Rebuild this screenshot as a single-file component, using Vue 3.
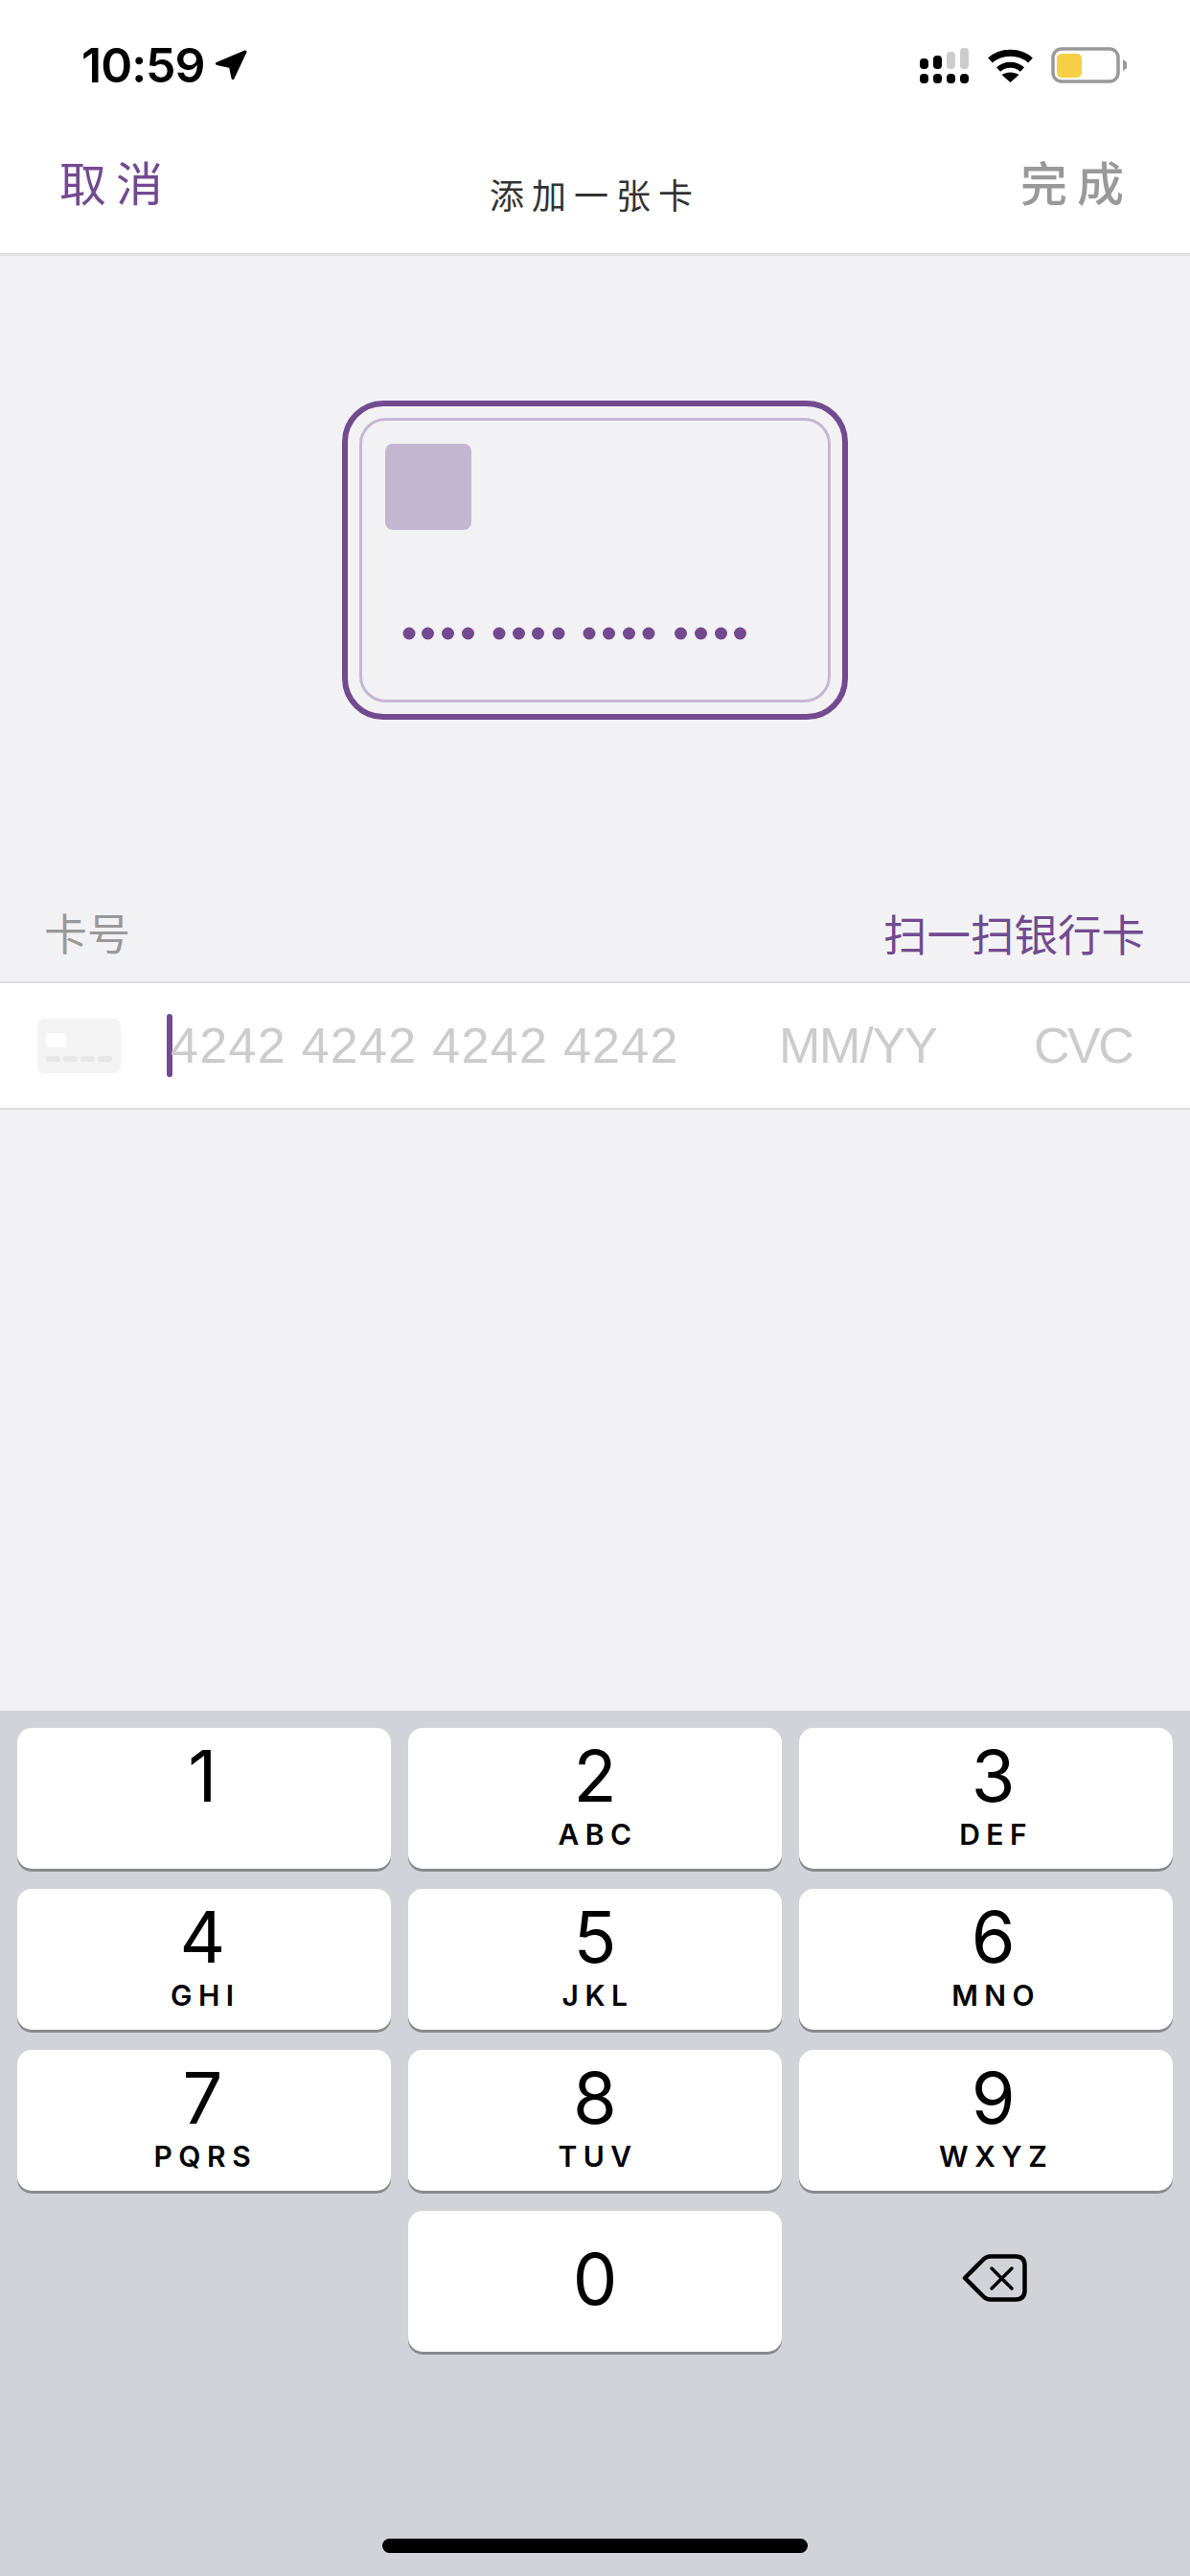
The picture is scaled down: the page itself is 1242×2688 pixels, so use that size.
<template>
  <div class="screen">
    <div class="status-bar">
      <div class="status-left">
        <span class="time">10:59</span>
        <svg class="arrow" width="34" height="32" viewBox="0 0 34 32">
          <path d="M32 2 L2.5 14.5 L16.5 17.5 L19 29.5 Z" fill="#000" stroke="#000" stroke-width="3" stroke-linejoin="round" />
        </svg>
      </div>
      <div class="status-right">
        <svg width="51" height="37" viewBox="0 0 51 37">
          <rect v-for="b in bars" :key="b.x" :x="b.x" :y="b.y" width="9" :height="22 - b.y" rx="4" :fill="b.fill" />
          <rect v-for="b in bars" :key="'d' + b.x" :x="b.x" y="27" width="9" height="10" rx="4" fill="#000" />
        </svg>
        <svg class="wifi" width="49" height="36" viewBox="0 0 49 36">
          <path d="M3.5 13 C14.5 2.5 34.5 2.5 45.5 13" fill="none" stroke="#000" stroke-width="7" />
          <path d="M12 22.5 C19 16 30 16 37 22.5" fill="none" stroke="#000" stroke-width="6" />
          <path d="M24.5 36 L15.5 28 C20.5 24.5 28.5 24.5 33.5 28 Z" fill="#000" />
        </svg>
        <svg class="battery" width="80" height="38" viewBox="0 0 80 38">
          <rect x="2" y="2" width="68" height="34" rx="9" fill="none" stroke="#999" stroke-width="3.5" />
          <rect x="6" y="7" width="26" height="25" rx="5" fill="#f7cf47" />
          <path d="M75 13 L79 16 L79 22 L75 25 Z" fill="#999" />
        </svg>
      </div>
    </div>

    <div class="nav">
      <span class="nav-side cancel">取消</span>
      <span class="nav-title">添加一张卡</span>
      <span class="nav-side done">完成</span>
    </div>

    <div class="card-area">
      <svg width="528" height="333" viewBox="0 0 528 333">
        <rect x="3" y="3" width="522" height="327" rx="40" fill="none" stroke="#734a90" stroke-width="6" />
        <rect x="19.5" y="19.5" width="489" height="294" rx="26" fill="none" stroke="#c5b7d3" stroke-width="3" />
        <rect x="45" y="45" width="90" height="90" rx="8" fill="#c3b6d0" />
        <circle v-for="x in dots" :key="x" :cx="x" cy="243" r="6.5" fill="#734a90" />
      </svg>
    </div>

    <div class="label-row">
      <span class="label">卡号</span>
      <span class="scan">扫一扫银行卡</span>
    </div>

    <div class="field">
      <svg class="field-icon" width="87" height="57" viewBox="0 0 87 57">
        <rect width="87" height="57" rx="7" fill="#f3f3f3" />
        <rect x="9" y="15" width="21" height="15" rx="2" fill="#fff" />
        <rect v-for="x in [9, 27, 45, 63]" :key="x" :x="x" y="39" width="15" height="6" rx="3" fill="#e7e7e7" />
      </svg>
      <span class="caret"></span>
      <span class="ph ph-number">4242 4242 4242 4242</span>
      <span class="ph ph-date">MM/YY</span>
      <span class="ph ph-cvc">CVC</span>
    </div>

    <div class="spacer"></div>

    <div class="keyboard">
      <div class="keys">
        <div v-for="k in keys" :key="k.n" class="key">
          <span class="digit">{{ k.n }}</span>
          <span class="letters">{{ k.l }}</span>
        </div>
        <div class="key-blank"></div>
        <div class="key key-zero"><span class="digit">0</span></div>
        <div class="key-blank backspace">
          <svg width="68" height="50" viewBox="0 0 68 50">
            <path d="M3 25 L21.5 6.5 Q25 2.5 30 2.5 L56 2.5 Q65.5 2.5 65.5 12 L65.5 38 Q65.5 47.5 56 47.5 L30 47.5 Q25 47.5 21.5 43.5 Z" fill="none" stroke="#000" stroke-width="4.5" stroke-linejoin="round" />
            <path d="M31 15 L52 36 M52 15 L31 36" fill="none" stroke="#000" stroke-width="3.5" stroke-linecap="round" />
          </svg>
        </div>
      </div>
      <div class="home-indicator"></div>
    </div>
  </div>
</template>

<script setup>
const bars = [
  { x: 0, y: 11, fill: '#000' },
  { x: 14, y: 8, fill: '#000' },
  { x: 28, y: 4, fill: '#ccc' },
  { x: 42, y: 0, fill: '#ccc' }
]

const dots = [
  70, 89.5, 110.5, 131.5,
  164, 184.5, 204.5, 226,
  258, 278.5, 299.5, 320,
  353.5, 374.5, 395.5, 415.5
]

const keys = [
  { n: '1', l: '' },
  { n: '2', l: 'ABC' },
  { n: '3', l: 'DEF' },
  { n: '4', l: 'GHI' },
  { n: '5', l: 'JKL' },
  { n: '6', l: 'MNO' },
  { n: '7', l: 'PQRS' },
  { n: '8', l: 'TUV' },
  { n: '9', l: 'WXYZ' }
]
</script>

<style>
html,
body {
  margin: 0;
  background: #f2f2f4;
}
</style>

<style scoped>
.screen {
  width: 1242px;
  height: 2688px;
  display: flex;
  flex-direction: column;
  background: #f2f2f4;
  font-family: Inter, "Noto Sans CJK SC", sans-serif;
  overflow: hidden;
}

.status-bar {
  height: 136px;
  background: #fff;
  display: flex;
  justify-content: space-between;
  align-items: center;
  padding: 0 65px 0 85px;
  box-sizing: border-box;
}

.status-left {
  display: flex;
  align-items: center;
  gap: 10px;
}

.time {
  font-size: 50px;
  line-height: 60px;
  font-weight: 600;
  letter-spacing: -1px;
  color: #000;
}

.status-right {
  display: flex;
  align-items: center;
}

.status-right svg {
  display: block;
}

.wifi {
  margin-left: 19px;
}

.battery {
  margin-left: 18px;
}

.nav {
  height: 131px;
  box-sizing: border-box;
  background: #fff;
  border-bottom: 3px solid #e0e0e2;
  display: grid;
  grid-template-columns: 1fr auto 1fr;
  padding: 0 62px;
  font-family: "Noto Sans CJK SC", sans-serif;
}

.nav-side {
  font-size: 49px;
  line-height: 56px;
  letter-spacing: 10px;
  padding-top: 25px;
}

.cancel {
  color: #734a90;
}

.done {
  color: #999;
  text-align: right;
  font-weight: 500;
  margin-right: -3px;
}

.nav-title {
  font-size: 36px;
  line-height: 44px;
  letter-spacing: 8px;
  color: #333;
  padding-top: 44px;
}

.card-area {
  display: flex;
  justify-content: center;
  padding-top: 151px;
}

.card-area svg {
  display: block;
}

.label-row {
  height: 273px;
  box-sizing: border-box;
  display: flex;
  justify-content: space-between;
  align-items: flex-end;
  padding: 0 47px 23px 46px;
  font-family: "Noto Sans CJK SC", sans-serif;
}

.label {
  font-size: 45px;
  line-height: 56px;
  color: #999;
}

.scan {
  font-size: 45.5px;
  line-height: 56px;
  color: #734a90;
}

.field {
  height: 134px;
  box-sizing: border-box;
  background: #fff;
  border-top: 2px solid #dfdfe1;
  border-bottom: 2px solid #dfdfe1;
  display: flex;
  align-items: center;
  padding-left: 39px;
}

.field-icon {
  display: block;
  flex-shrink: 0;
  margin-right: 48px;
}

.caret {
  width: 6px;
  height: 66px;
  border-radius: 3px;
  background: #734a90;
  flex-shrink: 0;
}

.ph {
  font-family: "Liberation Sans", sans-serif;
  font-size: 52px;
  line-height: 60px;
  color: #ccc;
}

.ph-number {
  width: 633px;
  letter-spacing: 1.3px;
  margin-left: -2px;
  padding-right: 2px;
}

.ph-date {
  width: 266px;
  letter-spacing: -1.2px;
}

.ph-cvc {
  letter-spacing: -2.5px;
}

.spacer {
  flex: 1;
}

.keyboard {
  position: relative;
  height: 903px;
  background: #d1d3d9;
  padding: 18px 18px 0;
  box-sizing: border-box;
}

.keys {
  display: grid;
  grid-template-columns: repeat(3, 1fr);
  column-gap: 18.5px;
  row-gap: 21px;
}

.key {
  height: 147px;
  background: #fff;
  border-radius: 15px;
  box-shadow: 0 3px 0 #898a8d;
  display: flex;
  flex-direction: column;
  align-items: center;
  padding-top: 13px;
  box-sizing: border-box;
  color: #000;
}

/* the right column sits a bit off centre in the reference */
.key:nth-child(3n) {
  padding-left: 15px;
}

.key:nth-child(3n + 1) {
  padding-right: 3px;
}

.digit {
  font-size: 74px;
  line-height: 74px;
  font-weight: 400;
}

.letters {
  height: 30px;
  font-size: 30px;
  line-height: 30px;
  font-weight: 600;
  letter-spacing: 6.5px;
  margin-top: 9px;
  padding-left: 6px;
}

.key-zero {
  justify-content: center;
  padding-top: 0;
  padding-bottom: 6px;
}

.key-blank {
  height: 147px;
}

.backspace {
  display: flex;
  align-items: center;
  justify-content: center;
}

.backspace svg {
  display: block;
  margin-top: -7px;
  margin-left: 18px;
}

.home-indicator {
  position: absolute;
  left: 399px;
  bottom: 24px;
  width: 444px;
  height: 15px;
  border-radius: 8px;
  background: #000;
}
</style>
